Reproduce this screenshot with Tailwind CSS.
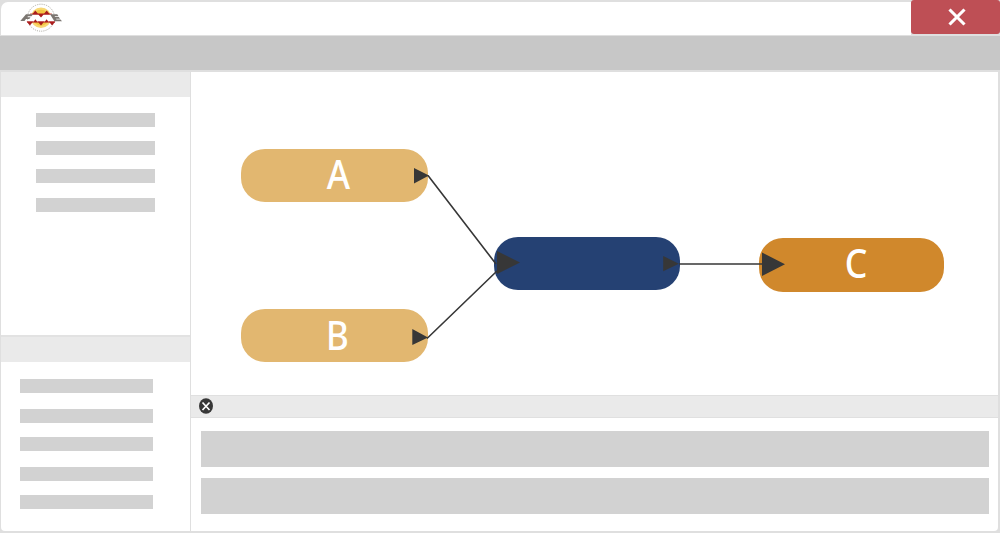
<!DOCTYPE html>
<html lang="en">
<head>
<meta charset="utf-8">
<title>Workbench</title>
<script src="https://cdn.jsdelivr.net/npm/@tailwindcss/browser@4"></script>
</head>
<body class="w-[1000px] h-[533px] overflow-hidden bg-[#dfdfdf] font-['Noto_Sans',sans-serif]">
<div class="flex flex-col w-[1000px] h-[533px]">
  <header class="flex justify-between h-[35px] shrink-0">
    <div class="grow mt-[2px] ml-px bg-white rounded-tl-[7px] pl-[19px]">
      <svg class="block -mt-px" width="42" height="34" viewBox="20 1 42 34">
        <circle cx="41" cy="17.700" r="13.500" fill="none" stroke="#a5a29a" stroke-width="1" stroke-dasharray="1 1.200"/>
        <circle cx="41" cy="17.700" r="10.300" fill="#f8d873"/>
        <circle cx="41" cy="17.700" r="8" fill="#f3c642"/>
        <path d="M29 14h24l1.500 8H27.500z" fill="#fff"/>
        <path d="M32 14.600l3.300-4 3.300 4zM43.400 14.600l3.300-4 3.300 4zM37.700 13.700h6.600L41 17.600zM26.600 21.600h6.600l-3.300 4zM37.700 21.600h6.600L41 25.600zM33.200 22.300l2.200-3 2.200 3zM44.400 22.300l2.200-3 2.200 3zM48.800 21.600h6.600l-3.300 4z" fill="#a81c1c"/>
        <path d="M30 14.100h22M27 22h28" stroke="#b3201f" stroke-width="0.900"/>
        <path d="M26 14.300h7l-1.500 2h-3.500l-.8 1h3.300l-1.200 1.800h-3.300l-1.500 2h-4.200z" fill="#7b7671"/>
        <path d="M50 14.300h7.300l1.200 1.900h-4l.6.900h3.700l1.200 1.600h-4l.5.700h4l1.500 1.800h-7.600z" fill="#7b7671"/>
      </svg>
    </div>
    <div class="flex w-[89px] h-[34px] items-center justify-center rounded-[3px] bg-[#be4f55]">
      <svg class="-mt-px ml-[3px]" width="18" height="18" viewBox="0 0 18 18"><path d="M1.500 1.500l15 15M16.500 1.500l-15 15" stroke="#fff" stroke-width="3.100"/></svg>
    </div>
  </header>
  <div class="h-[36px] mt-px shrink-0 bg-[#c7c7c7] border-b-2 border-[#dfdfdf]"></div>
  <main class="flex h-[459px] pl-px pr-[2px] shrink-0">
    <aside class="flex flex-col w-[189px] bg-white rounded-bl-[4px]">
      <div class="h-[25px] bg-[#eaeaea]"></div>
      <div class="flex flex-col h-[238px] pt-4 pl-[35px] gap-[14px]">
        <div class="w-[119px] h-[14px] bg-[#d2d2d2]"></div>
        <div class="w-[119px] h-[14px] bg-[#d2d2d2]"></div>
        <div class="w-[119px] h-[14px] bg-[#d2d2d2]"></div>
        <div class="w-[119px] h-[14px] mt-px bg-[#d2d2d2]"></div>
      </div>
      <div class="h-[27px] bg-[#eaeaea] border-t-2 border-[#e2e2e2]"></div>
      <div class="flex flex-col pt-[17px] pl-[19px]">
        <div class="w-[133px] h-[14px] bg-[#d2d2d2]"></div>
        <div class="w-[133px] h-[14px] mt-4 bg-[#d2d2d2]"></div>
        <div class="w-[133px] h-[14px] mt-[14px] bg-[#d2d2d2]"></div>
        <div class="w-[133px] h-[14px] mt-4 bg-[#d2d2d2]"></div>
        <div class="w-[133px] h-[14px] mt-[14px] bg-[#d2d2d2]"></div>
      </div>
    </aside>
    <section class="flex flex-col w-[807px] ml-px bg-white rounded-br-[4px]">
      <div class="relative h-[323px] shrink-0 text-white text-[40.500px] font-medium leading-[49px] text-center">
        <div class="absolute left-[50px] top-[77px] w-[187px] h-[53px] rounded-[24px] bg-[#e2b770] pl-2"><span class="block scale-x-88">A</span></div>
        <div class="absolute left-[50px] top-[237px] w-[187px] h-[53px] rounded-[24px] bg-[#e2b770] pl-[6px] leading-[51px]"><span class="block scale-x-86">B</span></div>
        <div class="absolute left-[303px] top-[165px] w-[186px] h-[53px] rounded-[24px] bg-[#254173]"></div>
        <div class="absolute left-[568px] top-[166px] w-[185px] h-[54px] rounded-[24px] bg-[#d0882c] pl-[9px]"><span class="block scale-x-88">C</span></div>
        <svg class="absolute left-0 top-0" width="807" height="323" viewBox="191 72 807 323" fill="#373737">
          <path d="M428 175.500L496 264M427 338.500L497 271M679 264H763" fill="none" stroke="#373737" stroke-width="1.600"/>
          <path d="M414 168l15 7.500-15 8zM412.300 329l15.700 8.500-15.700 7.500zM497 251l23 11.500L497 274zM663.200 256l15.600 7.800-15.600 7.400zM762 252.500l23 11.700L762 276z"/>
        </svg>
      </div>
      <div class="flex items-start h-[23px] shrink-0 pl-2 pt-[2px] bg-[#eaeaea] border-y border-[#e0e0e0]">
        <svg width="14" height="16" viewBox="0 0 14 16"><ellipse cx="7" cy="8" rx="7" ry="7.700" fill="#373737"/><path d="M3.500 4.500l7 7.500M10.500 4.500l-7 7.500" stroke="#fff" stroke-width="1.700"/></svg>
      </div>
      <div class="flex flex-col gap-[11px] pt-[13px] pl-[10px] pr-[9px]">
        <div class="h-[36px] bg-[#d2d2d2]"></div>
        <div class="h-[36px] bg-[#d2d2d2]"></div>
      </div>
    </section>
  </main>
</div>
</body>
</html>
